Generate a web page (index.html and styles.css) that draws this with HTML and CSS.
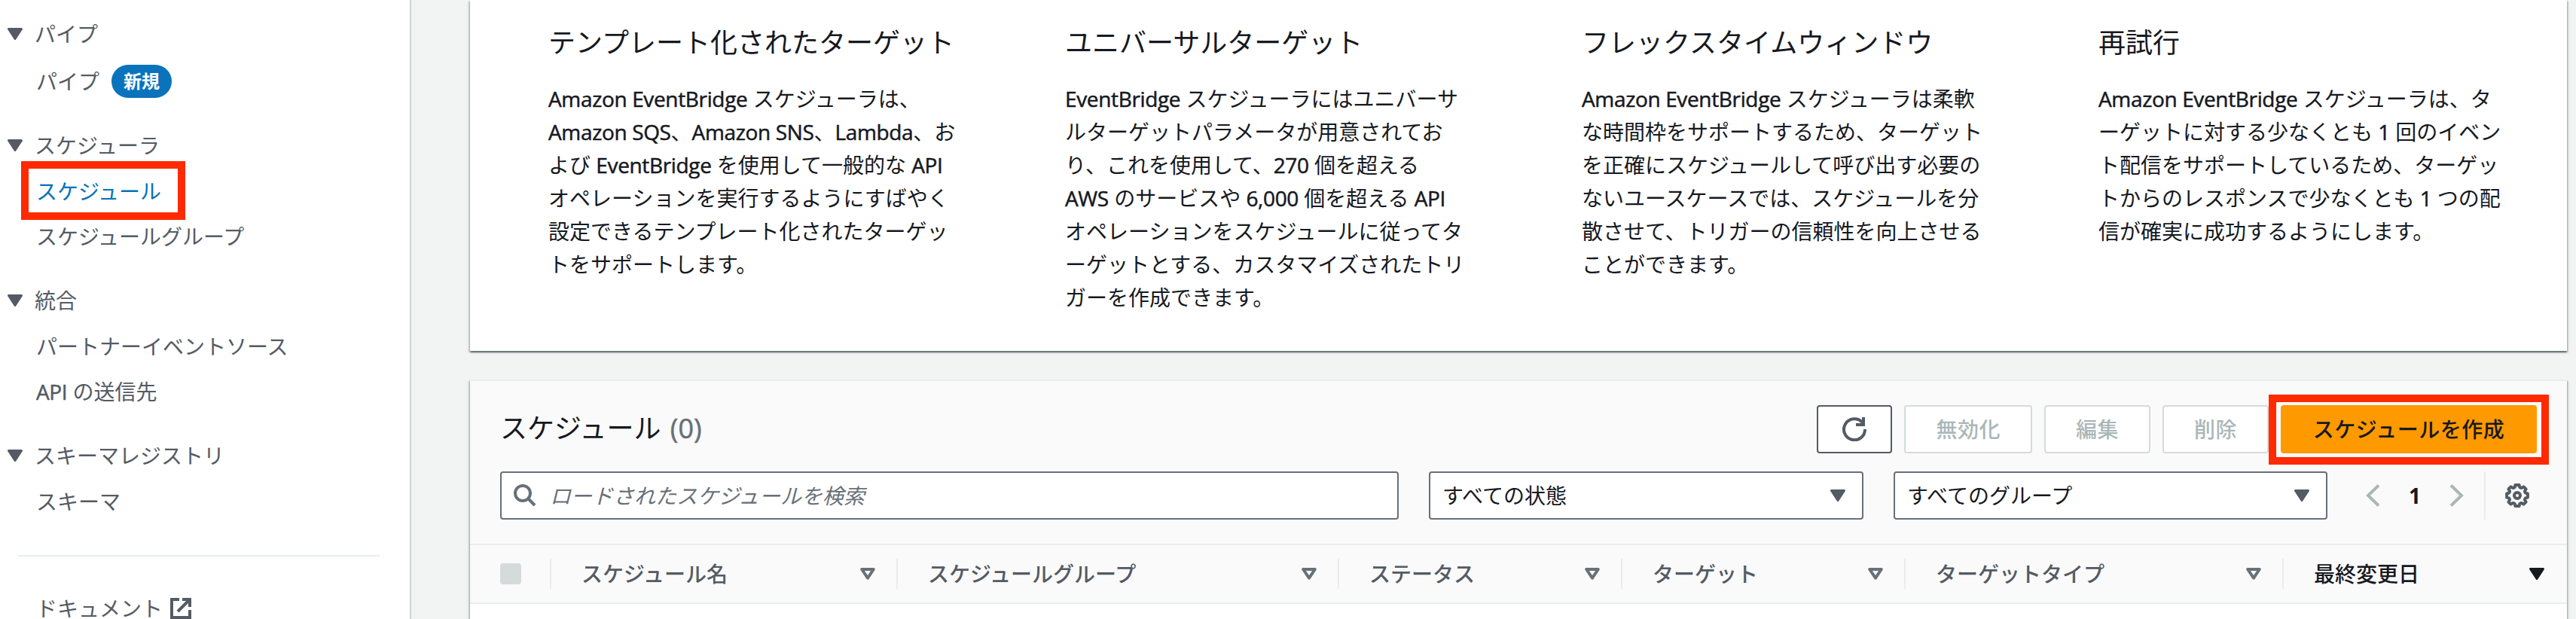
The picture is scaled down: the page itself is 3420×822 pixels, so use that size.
FILE: index.html
```
<!DOCTYPE html>
<html lang="ja">
<head>
  <meta charset="UTF-8" />
  <meta name="viewport" content="width=device-width, initial-scale=1.0"/>
  <title>Amazon EventBridge スケジューラ</title>
  <link rel="stylesheet" href="styles.css">
</head>
<body>
  <svg class="defs">
    <symbol id="caret" viewBox="0 0 20 16"><path d="M1.5 1.5h17L10 14.5z" fill="currentColor" stroke="currentColor" stroke-width="3" stroke-linejoin="round"/></symbol>
    <symbol id="sort" viewBox="0 0 20 16"><path d="M2.2 2h15.6L10 13.6z" fill="none" stroke="currentColor" stroke-width="4" stroke-linejoin="round"/></symbol>
  </svg>

  <nav class="sidebar">
    <section>
      <h3><svg class="caret"><use href="#caret"/></svg>パイプ</h3>
      <ul>
        <li class="with-badge">パイプ <span class="badge">新規</span></li>
      </ul>
    </section>
    <section>
      <h3><svg class="caret"><use href="#caret"/></svg>スケジューラ</h3>
      <ul>
        <li class="active">スケジュール<span class="mark"></span></li>
        <li>スケジュールグループ</li>
      </ul>
    </section>
    <section>
      <h3><svg class="caret"><use href="#caret"/></svg>統合</h3>
      <ul>
        <li>パートナーイベントソース</li>
        <li><span><span class="en">API</span> の送信先</span></li>
      </ul>
    </section>
    <section>
      <h3><svg class="caret"><use href="#caret"/></svg>スキーマレジストリ</h3>
      <ul>
        <li>スキーマ</li>
      </ul>
    </section>
    <hr>
    <ul>
      <li class="docs">ドキュメント
        <svg class="external" viewBox="0 0 28 28"><path d="M12 2H2v24h24V16M16 2h10v10M26 2L10 18" fill="none" stroke="currentColor" stroke-width="4"/></svg>
      </li>
    </ul>
  </nav>

  <main>
    <div class="panel features">
      <article>
        <h2>テンプレート化されたターゲット</h2>
        <p><span class="en">Amazon EventBridge</span> スケジューラは、<br><span class="en">Amazon SQS</span>、<span class="en">Amazon SNS</span>、<span class="en">Lambda</span>、お<br>よび <span class="en">EventBridge</span> を使用して一般的な <span class="en">API</span><br>オペレーションを実行するようにすばやく<br>設定できるテンプレート化されたターゲッ<br>トをサポートします。</p>
      </article>
      <article>
        <h2>ユニバーサルターゲット</h2>
        <p><span class="en">EventBridge</span> スケジューラにはユニバーサ<br>ルターゲットパラメータが用意されてお<br>り、これを使用して、<span class="en">270</span> 個を超える<br><span class="en">AWS</span> のサービスや <span class="en">6,000</span> 個を超える <span class="en">API</span><br>オペレーションをスケジュールに従ってタ<br>ーゲットとする、カスタマイズされたトリ<br>ガーを作成できます。</p>
      </article>
      <article>
        <h2>フレックスタイムウィンドウ</h2>
        <p><span class="en">Amazon EventBridge</span> スケジューラは柔軟<br>な時間枠をサポートするため、ターゲット<br>を正確にスケジュールして呼び出す必要の<br>ないユースケースでは、スケジュールを分<br>散させて、トリガーの信頼性を向上させる<br>ことができます。</p>
      </article>
      <article>
        <h2>再試行</h2>
        <p><span class="en">Amazon EventBridge</span> スケジューラは、タ<br>ーゲットに対する少なくとも <span class="en">1</span> 回のイベン<br>ト配信をサポートしているため、ターゲッ<br>トからのレスポンスで少なくとも <span class="en">1</span> つの配<br>信が確実に成功するようにします。</p>
      </article>
    </div>

    <div class="panel schedules">
      <div class="toolbar">
        <h2>スケジュール <span class="count">(0)</span></h2>
        <div class="actions">
          <button class="btn refresh">
            <svg viewBox="0 0 32 32"><path d="M28 0v10H18M30 16A14 14 0 1 1 26.5 7" fill="none" stroke="currentColor" stroke-width="4"/></svg>
          </button>
          <button class="btn" disabled>無効化</button>
          <button class="btn" disabled>編集</button>
          <button class="btn" disabled>削除</button>
          <div class="create">
            <button class="btn primary">スケジュールを作成</button>
            <span class="mark"></span>
          </div>
        </div>
      </div>

      <div class="filters">
        <div class="field search">
          <svg viewBox="0 0 30 30"><circle cx="12" cy="12" r="10" fill="none" stroke="currentColor" stroke-width="4"/><path d="M19 19l9 9" stroke="currentColor" stroke-width="4"/></svg>
          <span>ロードされたスケジュールを検索</span>
        </div>
        <div class="field select state">すべての状態<svg class="caret"><use href="#caret"/></svg></div>
        <div class="field select group">すべてのグループ<svg class="caret"><use href="#caret"/></svg></div>
        <div class="pages">
          <svg class="chevron" viewBox="0 0 20 30"><path d="M17 1.5L3 15l14 13.5" fill="none" stroke="currentColor" stroke-width="4"/></svg>
          <b>1</b>
          <svg class="chevron" viewBox="0 0 20 30"><path d="M3 1.5L17 15 3 28.5" fill="none" stroke="currentColor" stroke-width="4"/></svg>
        </div>
        <div class="settings">
          <svg viewBox="0 0 32 32" fill="none" stroke="currentColor" stroke-width="4" stroke-linejoin="round"><path d="M13.4 2h5.2l.8 3.2 2.2.9 2.9-1.7 3.1 3.1-1.7 2.9.9 2.2 3.1.8v5.2l-3.1.8-.9 2.2 1.7 2.9-3.1 3.1-2.9-1.7-2.2.9-.8 3.2h-5.2l-.8-3.2-2.2-.9-2.9 1.7-3.1-3.1 1.7-2.9-.9-2.2-3.1-.8v-5.2l3.1-.8.9-2.2-1.7-2.9 3.1-3.1 2.9 1.7 2.2-.9z"/><circle cx="16" cy="16" r="4"/></svg>
        </div>
      </div>

      <div class="thead">
        <div class="th"><span class="checkbox"></span></div>
        <div class="th">スケジュール名<svg class="caret"><use href="#sort"/></svg></div>
        <div class="th">スケジュールグループ<svg class="caret"><use href="#sort"/></svg></div>
        <div class="th">ステータス<svg class="caret"><use href="#sort"/></svg></div>
        <div class="th">ターゲット<svg class="caret"><use href="#sort"/></svg></div>
        <div class="th">ターゲットタイプ<svg class="caret"><use href="#sort"/></svg></div>
        <div class="th sorted">最終変更日<svg class="caret"><use href="#caret"/></svg></div>
      </div>
    </div>
  </main>
</body>
</html>
```
FILE: styles.css
```
* {
  box-sizing: border-box;
}

body {
  margin: 0;
  height: 822px;
  overflow: hidden;
  display: flex;
  background: #f2f3f3;
  color: #16191f;
  font-family: "Open Sans", "Noto Sans CJK JP", sans-serif;
  font-size: 28px;
  line-height: 44px;
  white-space: nowrap;
}

h2, h3, p, ul {
  margin: 0;
  padding: 0;
  font-weight: 400;
}

ul {
  list-style: none;
}

svg {
  flex: none;
}

.defs {
  display: none;
}

/* latin words, a bit tighter and heavier than the kana */
.en {
  letter-spacing: -0.35px;
  -webkit-text-stroke: 0.5px currentColor;
}

.caret {
  width: 20px;
  height: 16px;
}

/* red highlight frame */
.mark {
  position: absolute;
  border: 10px solid #ff2a00;
  pointer-events: none;
}

/* sidebar */
.sidebar {
  width: 546px;
  height: 822px;
  flex: none;
  padding-top: 14px;
  background: #fff;
  border-right: 2px solid #d0d4d4;
  color: #545b64;
}

.sidebar section {
  margin-bottom: 24px;
}

.sidebar h3 {
  display: flex;
  align-items: center;
  gap: 16px;
  height: 62px;
  padding-left: 10px;
  font-size: 28px;
}

.sidebar li {
  position: relative;
  display: flex;
  align-items: center;
  height: 60px;
  padding-left: 48px;
}

.sidebar .with-badge {
  height: 62px;
  padding-top: 2px;
}

.sidebar .docs {
  height: 28px;
  line-height: 28px;
}

.sidebar .active {
  color: #0073bb;
}

.active .mark {
  left: 28px;
  top: -10px;
  width: 218px;
  height: 78px;
}

.badge {
  margin-left: 16px;
  padding: 0 16px;
  border-radius: 22px;
  background: #0a73bb;
  color: #fff;
  font-size: 24px;
  font-weight: 700;
}

.sidebar hr {
  width: 480px;
  height: 2px;
  margin: 41px 0 55px 24px;
  border: none;
  background: #eaeded;
}

.external {
  width: 28px;
  height: 28px;
  margin-left: 10px;
}

/* content */
main {
  width: 2784px;
  margin-left: 78px;
  flex: none;
}

.panel {
  background: #fff;
  box-shadow: 0 2px 2px rgba(0, 28, 36, 0.5), 2px 2px 2px rgba(0, 28, 36, 0.15), -2px 2px 2px rgba(0, 28, 36, 0.15);
}

.features {
  display: grid;
  grid-template-columns: repeat(4, 686px);
  height: 466px;
  padding: 35px 0 0 104px;
}

.features h2 {
  margin-bottom: 30px;
  font-size: 36px;
}

.schedules {
  height: 318px;
  margin-top: 38px;
  border-top: 2px solid #eaeded;
  background: #fff;
}

.toolbar {
  display: flex;
  justify-content: space-between;
  padding: 32px 40px 0;
  background: #fafafa;
}

.toolbar h2 {
  font-size: 36px;
  line-height: 62px;
}

.count {
  margin-left: 3px;
  color: #687078;
  -webkit-text-stroke: 0.5px currentColor;
}

.actions {
  display: flex;
  gap: 16px;
}

.btn {
  height: 64px;
  padding: 0 40px;
  border: 2px solid #545b64;
  border-radius: 4px;
  background: #fff;
  color: #545b64;
  font: inherit;
  font-weight: 500;
  letter-spacing: 0.5px;
}

.btn:disabled {
  border-color: #d5dbdb;
  color: #aab7b8;
}

.refresh {
  width: 100px;
  padding: 0 32px;
}

.refresh svg {
  display: block;
  width: 32px;
  height: 32px;
}

.create {
  position: relative;
}

.primary {
  width: 340px;
  padding: 0;
  border-color: #ff9900;
  background: #ff9900;
  color: #16191f;
}

.create .mark {
  left: -16px;
  top: -14px;
  width: 372px;
  height: 93px;
}

.filters {
  display: flex;
  height: 120px;
  padding: 24px 40px 32px;
  background: #fafafa;
}

.field {
  display: flex;
  align-items: center;
  height: 64px;
  margin-right: 40px;
  border: 2px solid #687078;
  border-radius: 4px;
  background: #fff;
}

.search {
  width: 1193px;
  gap: 18px;
  padding-left: 16px;
  color: #687078;
  font-style: italic;
}

.search svg {
  width: 30px;
  height: 30px;
}

.select {
  justify-content: space-between;
  padding: 0 22px 0 16px;
}

.select .caret {
  color: #545b64;
}

.state {
  width: 577px;
}

.group {
  width: 576px;
}

.pages {
  display: flex;
  align-items: center;
  justify-content: space-between;
  width: 130px;
  height: 64px;
  margin-left: 11px;
}

.chevron {
  width: 20px;
  height: 30px;
  color: #aab7b8;
}

.settings {
  display: flex;
  align-items: center;
  height: 64px;
  margin-left: 27px;
  padding-left: 26px;
  border-left: 2px solid #eaeded;
  color: #545b64;
}

.settings svg {
  width: 32px;
  height: 32px;
}

.thead {
  display: grid;
  grid-template-columns: 108px 460px 586px 376px 376px 502px 376px;
  padding: 18px 0;
  border-top: 2px solid #eaeded;
  border-bottom: 2px solid #eaeded;
  background: #fafafa;
  color: #545b64;
  font-weight: 500;
}

.th {
  display: flex;
  align-items: center;
  justify-content: space-between;
  height: 40px;
  padding: 0 28px 0 40px;
  border-right: 2px solid #eaeded;
}

.th .caret {
  color: #687078;
}

.checkbox {
  width: 28px;
  height: 28px;
  border-radius: 4px;
  background: #d5dbdb;
}

.th:last-child {
  border-right: none;
  padding-right: 30px;
}

.sorted,
.sorted .caret {
  color: #16191f;
}
```
